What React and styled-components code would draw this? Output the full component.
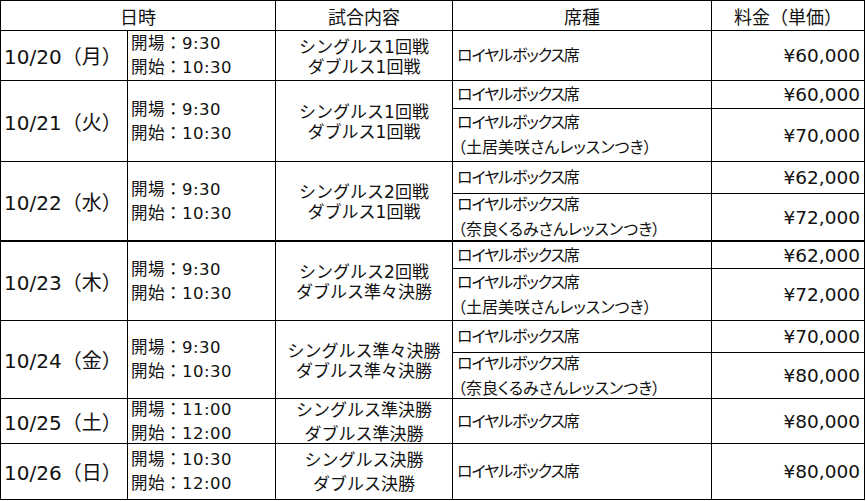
import React from "react";
import styled, { createGlobalStyle, css } from "styled-components";

const Global = createGlobalStyle`
  html, body { margin: 0; padding: 0; background: #fff; }
  body { font-family: "DejaVu Sans", "Noto Sans CJK JP", sans-serif; color: #111; }
  * { box-sizing: border-box; }
`;

const Sheet = styled.div`
  display: grid;
  grid-template-columns: 127px 148px 177px 259px 153px;
  grid-template-rows: 30px 50px 28px 53px 32px 48px 27px 52px 32px 46px 45px 56px;
  width: 865px;
  border-left: 1px solid #000;
  border-top: 1px solid #000;
  font-family: "DejaVu Sans", "Noto Sans CJK JP", sans-serif;
  color: #111;
`;

const cellBase = css`
  border-right: 1px solid #000;
  border-bottom: ${(p) => (p.$thick ? 2 : 1)}px solid #000;
  grid-row: span ${(p) => p.$span || 1};
  display: flex;
  flex-direction: column;
  justify-content: center;
  white-space: nowrap;
  overflow: hidden;
  min-width: 0;
`;

const HeadCell = styled.div`
  ${cellBase};
  grid-column: span ${(p) => p.$cols || 1};
  align-items: center;
  font-family: "Noto Sans CJK JP", sans-serif;
  font-size: 18px;
  line-height: 20px;
`;

const DateCell = styled.div`
  ${cellBase};
  font-size: 20px;
  line-height: 22px;
  padding: 3px 0 0 3px;
`;

const TimeCell = styled.div`
  ${cellBase};
  font-size: 16.5px;
  line-height: 24px;
  padding: 1px 0 0 3px;
  letter-spacing: 0.5px;
`;

const MatchCell = styled.div`
  ${cellBase};
  align-items: center;
  font-size: 17px;
  line-height: ${(p) => (p.$loose ? 24 : 20)}px;
  padding-top: ${(p) => (p.$loose ? 1 : 2)}px;
`;

const SeatCell = styled.div`
  ${cellBase};
  font-size: 16px;
  line-height: 25px;
  padding-left: 4px;
  font-feature-settings: "palt";
`;

const PriceCell = styled.div`
  ${cellBase};
  align-items: flex-end;
  font-size: 18.5px;
  line-height: 22px;
  padding: 1px 4px 0 0;
`;

const Line = styled.div``;

const SeatName = styled.div`
  letter-spacing: -1.1px;
`;

const Note = styled.div`
  margin-left: 1px;
`;

const days = [
  {
    date: "10/20（月）",
    open: "9:30",
    start: "10:30",
    match: ["シングルス1回戦", "ダブルス1回戦"],
    seats: [{ price: "¥60,000" }],
  },
  {
    date: "10/21（火）",
    open: "9:30",
    start: "10:30",
    match: ["シングルス1回戦", "ダブルス1回戦"],
    seats: [
      { price: "¥60,000" },
      { note: "（土居美咲さんレッスンつき）", price: "¥70,000" },
    ],
  },
  {
    date: "10/22（水）",
    open: "9:30",
    start: "10:30",
    thick: true,
    match: ["シングルス2回戦", "ダブルス1回戦"],
    seats: [
      { price: "¥62,000" },
      { note: "（奈良くるみさんレッスンつき）", price: "¥72,000" },
    ],
  },
  {
    date: "10/23（木）",
    open: "9:30",
    start: "10:30",
    match: ["シングルス2回戦", "ダブルス準々決勝"],
    seats: [
      { price: "¥62,000" },
      { note: "（土居美咲さんレッスンつき）", price: "¥72,000" },
    ],
  },
  {
    date: "10/24（金）",
    open: "9:30",
    start: "10:30",
    match: ["シングルス準々決勝", "ダブルス準々決勝"],
    seats: [
      { price: "¥70,000" },
      { note: "（奈良くるみさんレッスンつき）", price: "¥80,000" },
    ],
  },
  {
    date: "10/25（土）",
    open: "11:00",
    start: "12:00",
    loose: true,
    match: ["シングルス準決勝", "ダブルス準決勝"],
    seats: [{ price: "¥80,000" }],
  },
  {
    date: "10/26（日）",
    open: "10:30",
    start: "12:00",
    loose: true,
    match: ["シングルス決勝", "ダブルス決勝"],
    seats: [{ price: "¥80,000" }],
  },
];

export default function App() {
  return (
    <>
      <Global />
      <Sheet>
        <HeadCell $cols={2}>日時</HeadCell>
        <HeadCell>試合内容</HeadCell>
        <HeadCell>席種</HeadCell>
        <HeadCell>料金（単価）</HeadCell>
        {days.map((d) => {
          const n = d.seats.length;
          return (
            <React.Fragment key={d.date}>
              {d.seats.map((s, i) => {
                const last = i === n - 1;
                const thick = d.thick && last;
                return (
                  <React.Fragment key={i}>
                    {i === 0 && (
                      <>
                        <DateCell $span={n} $thick={d.thick}>
                          {d.date}
                        </DateCell>
                        <TimeCell $span={n} $thick={d.thick}>
                          <Line>開場：{d.open}</Line>
                          <Line>開始：{d.start}</Line>
                        </TimeCell>
                        <MatchCell $span={n} $thick={d.thick} $loose={d.loose}>
                          {d.match.map((m) => (
                            <Line key={m}>{m}</Line>
                          ))}
                        </MatchCell>
                      </>
                    )}
                    <SeatCell $thick={thick}>
                      <SeatName>ロイヤルボックス席</SeatName>
                      {s.note && <Note>{s.note}</Note>}
                    </SeatCell>
                    <PriceCell $thick={thick}>{s.price}</PriceCell>
                  </React.Fragment>
                );
              })}
            </React.Fragment>
          );
        })}
      </Sheet>
    </>
  );
}
